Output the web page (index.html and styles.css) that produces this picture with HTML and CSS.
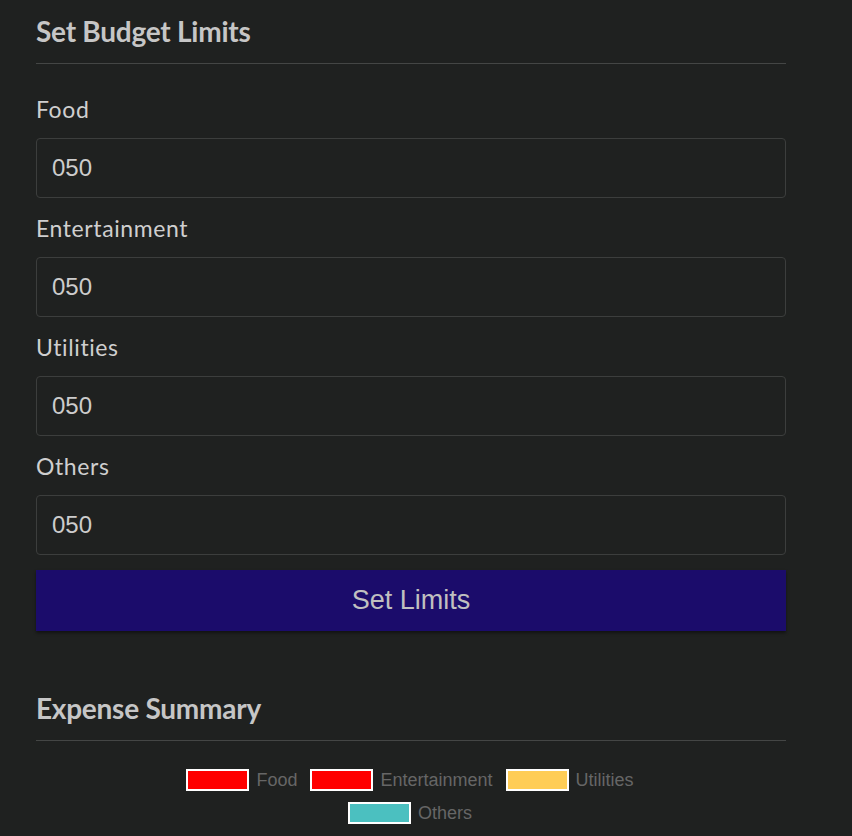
FILE: index.html
```html
<!DOCTYPE html>
<html lang="en">
<head>
<meta charset="utf-8">
<title>Budget</title>
<link rel="stylesheet" href="styles.css">
</head>
<body>
<main class="page">
  <section class="budget">
    <h2 class="section-title">Set Budget Limits</h2>
    <form class="limits">
      <div class="field">
        <label class="field-label" for="food">Food</label>
        <input class="field-input" id="food" type="text" value="050">
      </div>
      <div class="field">
        <label class="field-label" for="ent">Entertainment</label>
        <input class="field-input" id="ent" type="text" value="050">
      </div>
      <div class="field">
        <label class="field-label" for="util">Utilities</label>
        <input class="field-input" id="util" type="text" value="050">
      </div>
      <div class="field">
        <label class="field-label" for="oth">Others</label>
        <input class="field-input" id="oth" type="text" value="050">
      </div>
      <button class="submit" type="button">Set Limits</button>
    </form>
  </section>
  <section class="summary">
    <h2 class="section-title">Expense Summary</h2>
    <div class="legend">
      <div class="legend-row">
        <div class="legend-item"><span class="swatch swatch-red"></span><span class="legend-text">Food</span></div>
        <div class="legend-item"><span class="swatch swatch-red"></span><span class="legend-text">Entertainment</span></div>
        <div class="legend-item"><span class="swatch swatch-yellow"></span><span class="legend-text">Utilities</span></div>
      </div>
      <div class="legend-row">
        <div class="legend-item"><span class="swatch swatch-teal"></span><span class="legend-text">Others</span></div>
      </div>
    </div>
  </section>
</main>
</body>
</html>
```
FILE: styles.css
```css
html, body {
  margin: 0;
  padding: 0;
  background: #1f2120;
}
body {
  font-family: "Lato", "Liberation Sans", sans-serif;
  color: #cccccc;
}
.page {
  width: 750px;
  margin-left: 36px;
  padding-top: 13px;
}
.section-title {
  margin: 0;
  font-family: "Lato", sans-serif;
  font-weight: 700;
  font-size: 28px;
  line-height: 36px;
  letter-spacing: -0.25px;
  color: #c6c6c6;
  padding-bottom: 14px;
  border-bottom: 1px solid #444645;
}
.limits {
  display: flex;
  flex-direction: column;
  gap: 15px;
  margin-top: 30px;
}
.field {
  display: flex;
  flex-direction: column;
}
.field-label {
  font-size: 23px;
  line-height: 30px;
  letter-spacing: 0.6px;
  color: #cfcfcf;
  margin-bottom: 14px;
}
.field-input {
  box-sizing: border-box;
  height: 60px;
  width: 100%;
  margin: 0;
  padding: 0 15px;
  background: #1f2120;
  border: 1px solid #3c3e3d;
  border-radius: 4px;
  font-family: "Liberation Sans", Arial, sans-serif;
  font-size: 24px;
  color: #cccccc;
  outline: none;
}
.submit {
  height: 61px;
  width: 100%;
  margin: 0;
  border: none;
  border-radius: 0;
  background: #1b0c6b;
  color: #c0c0c0;
  font-family: "Liberation Sans", Arial, sans-serif;
  font-size: 27px;
  box-shadow: 0 2px 3px rgba(0, 0, 0, 0.45);
}
.summary {
  margin-top: 59px;
}
.legend {
  display: flex;
  flex-direction: column;
  align-items: center;
  gap: 11px;
  margin-top: 28px;
  padding-right: 2px;
}
.legend-row {
  display: flex;
  align-items: center;
  gap: 13px;
  height: 22px;
}
.legend-item {
  display: flex;
  align-items: center;
  gap: 7px;
}
.swatch {
  box-sizing: border-box;
  display: block;
  width: 63px;
  height: 22px;
  border: 2px solid #ffffff;
}
.swatch-red { background: #ff0000; }
.swatch-yellow { background: #ffcd56; }
.swatch-teal { background: #4bc0c0; }
.legend-text {
  font-family: "Liberation Sans", Arial, sans-serif;
  font-size: 18px;
  color: #666666;
}
```
